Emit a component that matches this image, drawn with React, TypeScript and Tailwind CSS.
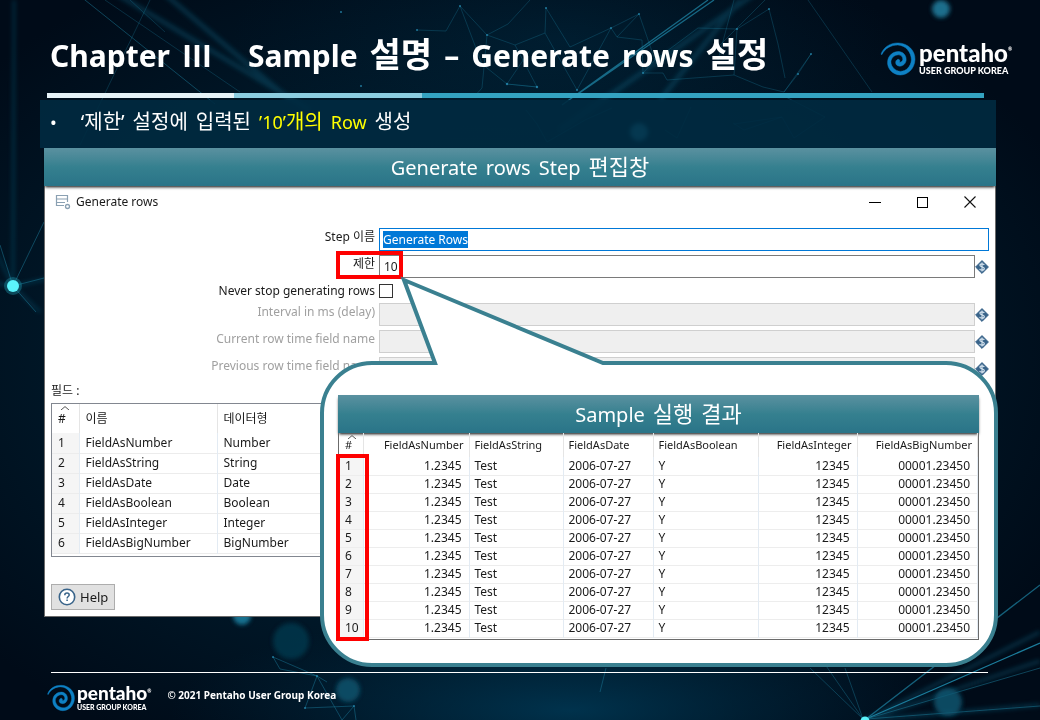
import { useEffect, useRef } from "react";

const FIELDS = [
  ["FieldAsNumber", "Number"],
  ["FieldAsString", "String"],
  ["FieldAsDate", "Date"],
  ["FieldAsBoolean", "Boolean"],
  ["FieldAsInteger", "Integer"],
  ["FieldAsBigNumber", "BigNumber"],
];

const RESULT_COLUMNS = [
  { name: "FieldAsNumber", value: "1.2345", right: true },
  { name: "FieldAsString", value: "Test", right: false },
  { name: "FieldAsDate", value: "2006-07-27", right: false },
  { name: "FieldAsBoolean", value: "Y", right: false },
  { name: "FieldAsInteger", value: "12345", right: true },
  { name: "FieldAsBigNumber", value: "00001.23450", right: true },
];

const RESULT_ROWS = Array.from({ length: 10 }, (_, i) => i + 1);

const HANGUL = /[\uac00-\ud7a3]/;

function Backdrop() {
  return (
    <svg
      className="absolute inset-0 h-full w-full"
      viewBox="0 0 1040 720"
      preserveAspectRatio="xMidYMid slice"
      aria-hidden="true"
    >
      <defs>
        <radialGradient id="base" cx="0.46" cy="0.5" r="0.62">
          <stop offset="0" stopColor="#003148" />
          <stop offset="0.55" stopColor="#001a2b" />
          <stop offset="1" stopColor="#000b18" />
        </radialGradient>
        <radialGradient id="low" cx="0.5" cy="0.5" r="0.5">
          <stop offset="0" stopColor="#00486a" stopOpacity="0.6" />
          <stop offset="1" stopColor="#00304a" stopOpacity="0" />
        </radialGradient>
        <filter id="soft" x="-50%" y="-50%" width="200%" height="200%">
          <feGaussianBlur stdDeviation="2" />
        </filter>
      </defs>
      <rect width="1040" height="720" fill="url(#base)" />
      <ellipse cx="570" cy="710" rx="400" ry="100" fill="url(#low)" />
      <ellipse cx="560" cy="40" rx="330" ry="130" fill="url(#low)" opacity="0.3" />

      <g stroke="#0a5b78" filter="url(#soft)" opacity="0.4">
        <path d="M110 -10L310 110M160 -10L290 100M740 0L660 100M560 130L760 -10" strokeWidth="5" fill="none" />
        <path d="M13 286L14 0M13 286L-10 240M13 286L46 279M13 286L40 312M13 286L-5 283" strokeWidth="3" fill="none" />
        <path d="M866 720L1040 661M866 720L1040 705M866 720L1040 632" strokeWidth="4" fill="none" />
      </g>

      <g stroke="#1b7d9c" fill="none">
        <path d="M75 -8L215 104" strokeWidth="1" opacity="0.5" />
        <path d="M105 0L240 92M130 0L165 32" strokeWidth="1" opacity="0.3" />
        <path d="M708 0L562 105M714 0L575 96" strokeWidth="1.3" opacity="0.8" />
        <path d="M765 0L715 50M734 0L718 60M808 0L872 92M150 0L80 145" strokeWidth="1" opacity="0.3" />
        <path d="M13 286L44 222M13 286L0 245M13 286L44 278M13 286L36 312" strokeWidth="1" opacity="0.5" />
        <path d="M866 719L1040 643" strokeWidth="1.3" />
        <path d="M866 719L1040 585" strokeWidth="1.3" opacity="0.75" />
        <path d="M866 719L1040 668M866 719L1040 706" strokeWidth="1" opacity="0.5" />
        <path d="M863 719L810 668M863 719L845 668M863 719L822 660" strokeWidth="1" opacity="0.4" />
        <path
          d="M417 30L446 31L460 6L487 35L508 24L530 0M460 6L482 64L507 84L537 87L515 45L487 35L482 88L473 98M546 8L545 33L515 45M546 8L570 47L611 28L639 14L617 37L611 28L577 90L545 33M639 14L655 60L643 73L642 40L617 37M643 73L663 73L667 80L734 75L737 29L769 9L778 44L785 78M737 29L698 28L655 60M811 54L798 74L784 92L811 54M734 75L763 87L784 92M537 87L507 84L530 50"
          strokeWidth="0.7"
          opacity="0.45"
        />
        <path
          d="M273 657L280 669L317 676L305 708L354 706L342 720L317 676L327 682M354 706L356 720M273 657L317 676M600 692L606 668"
          strokeWidth="0.8"
          opacity="0.6"
        />
        <path
          d="M526 110L537 124L547 142L573 127L585 120L612 108M665 130L677 138L691 107M733 123L744 130L782 117L794 138L825 117L782 95M782 117L734 124"
          strokeWidth="0.7"
          opacity="0.5"
        />
      </g>

      <g fill="#2a94bd" opacity="0.75">
        <circle cx="341" cy="12" r="1" />
        <circle cx="361" cy="86" r="1" />
        <circle cx="460" cy="6" r="1" />
        <circle cx="417" cy="30" r="1" />
        <circle cx="487" cy="35" r="1" />
        <circle cx="507" cy="84" r="1.2" />
        <circle cx="537" cy="87" r="1.2" />
        <circle cx="546" cy="8" r="1" />
        <circle cx="611" cy="28" r="1" />
        <circle cx="639" cy="14" r="1" />
        <circle cx="577" cy="90" r="1" />
        <circle cx="643" cy="73" r="1" />
        <circle cx="737" cy="29" r="1" />
        <circle cx="769" cy="9" r="1" />
        <circle cx="811" cy="54" r="1" />
        <circle cx="798" cy="74" r="1" />
        <circle cx="273" cy="657" r="1" />
        <circle cx="317" cy="676" r="1" />
        <circle cx="354" cy="706" r="1" />
        <circle cx="305" cy="708" r="1" />
      </g>

      <g filter="url(#soft)">
        <circle cx="941" cy="9" r="9" fill="#1b6e8c" />
        <circle cx="639" cy="132" r="9" fill="#35b5dd" />
        <circle cx="242" cy="616" r="9" fill="#18718f" />
        <circle cx="348" cy="690" r="12" fill="#0b5570" opacity="0.8" />
        <circle cx="291" cy="641" r="18" fill="#06425a" opacity="0.6" />
        <circle cx="948" cy="702" r="14" fill="#0c5873" opacity="0.8" />
      </g>
      <circle cx="13" cy="286" r="9" fill="#21a5bd" opacity="0.35" />
      <circle cx="13" cy="286" r="6" fill="#5bf3fb" />
      <circle cx="865" cy="721" r="4.5" fill="#5bf3fb" />
    </svg>
  );
}

function Words({ text, className, hangulClass }: { text: string; className: string; hangulClass: string }) {
  return (
    <span className={className}>
      {text.split(" ").map((word, i) => (
        <span key={i} className={HANGUL.test(word) ? hangulClass : undefined}>
          {word}{" "}
        </span>
      ))}
    </span>
  );
}

function Spiral({ className }: { className: string }) {
  return (
    <svg className={className} viewBox="35 34 107 103" aria-hidden="true">
      <path
        d="M37 71C45 48 67 36 90 37C119 38 141 60 140 87C139 115 118 134 95 134C72 133 55 114 57 93C59 74 74 62 92 63C107 65 115 78 113 91C110 104 98 110 88 106C79 102 80 90 87 87C92 85 96 90 93 95C98 96 102 92 103 88C104 80 98 73 90 73C78 73 68 82 67 94C67 109 80 122 96 123C113 123 128 108 129 88C129 65 112 44 88 43C68 43 49 53 40 72Z"
        fill="#0e81c4"
        stroke="#0e81c4"
        strokeWidth="1.5"
      />
    </svg>
  );
}

function Logo({ small = false }: { small?: boolean }) {
  return (
    <div className={small ? "flex items-start gap-0.5" : "flex items-start gap-[3px]"}>
      <Spiral className={small ? "h-7 w-7" : "h-[34px] w-9"} />
      <div className="font-['Lato','Liberation_Sans',sans-serif] text-white">
        <div className={small ? "flex text-[19px] font-black leading-[17px]" : "flex text-[24px] font-black leading-[22px]"}>
          pentaho
          <span className="text-[5px] leading-[14px]">®</span>
        </div>
        <div className={small ? "pt-0.5 text-[7px] font-black leading-[9px]" : "pt-px text-[9px] font-black leading-[11px]"}>
          USER GROUP KOREA
        </div>
      </div>
    </div>
  );
}

function VariableMark() {
  return (
    <svg className="h-[14px] w-[14px]" viewBox="0 0 14 14" aria-hidden="true">
      <path d="M7 0.6L13.4 7L7 13.4L0.6 7Z" fill="#39648a" stroke="#39648a" strokeLinejoin="round" />
      <path
        d="M9.3 5C8.9 4.1 8 3.8 7 3.8C5.8 3.8 4.9 4.4 4.9 5.3C4.9 7.2 9.3 6.3 9.3 8.5C9.3 9.6 8.2 10.2 7 10.2C5.8 10.2 4.9 9.8 4.6 8.8M7 2.6V11.4"
        fill="none"
        stroke="#d6e4ef"
        strokeWidth="1.2"
      />
    </svg>
  );
}

function SortCaret() {
  return (
    <svg className="absolute left-2 top-0.5 h-1 w-2.5" viewBox="0 0 10 4" aria-hidden="true">
      <path d="M1 4L5 0.6L9 4" fill="none" stroke="#555" />
    </svg>
  );
}

function Banner({ text }: { text: string }) {
  return (
    <h2 className="relative flex h-[38px] items-center justify-center bg-linear-to-b from-[#5a91a0] via-[#35808f] to-[#2a7488] text-[20px] leading-[30px] text-white shadow-[0_2px_3px_-1px_#000]">
      <Words text={text} className="flex items-baseline gap-2" hangulClass="text-[22px]" />
    </h2>
  );
}

function FormRow({ id, label, disabled = false, value = "" }: { id: string; label: string; disabled?: boolean; value?: string }) {
  return (
    <div className="grid grid-cols-[330px_1fr_14px] items-center">
      <label htmlFor={id} className={disabled ? "pb-[5px] text-right text-[#a0a0a0]" : "pb-[5px] text-right"}>
        {label}
      </label>
      <input
        id={id}
        type="text"
        defaultValue={value}
        disabled={disabled}
        className={
          disabled
            ? "ml-1 h-[23px] min-w-0 border border-[#cfcfcf] bg-[#efefef] px-1"
            : "ml-1 h-[23px] min-w-0 border border-[#7a7a7a] bg-white px-1 outline-none"
        }
      />
      <VariableMark />
    </div>
  );
}

function StepForm() {
  const nameRef = useRef<HTMLInputElement>(null);
  useEffect(() => {
    nameRef.current?.focus();
    nameRef.current?.select();
  }, []);

  return (
    <form className="flex flex-col gap-1 pr-1.5 pt-2.5">
      <div className="grid grid-cols-[330px_1fr] items-center">
        <label htmlFor="step-name" className="pb-[5px] text-right">
          Step 이름
        </label>
        <input
          id="step-name"
          ref={nameRef}
          type="text"
          defaultValue="Generate Rows"
          className="ml-1 h-[23px] min-w-0 border border-[#0078d7] bg-white px-[3px] outline-none selection:bg-[#0078d7] selection:text-white"
        />
      </div>
      <div className="relative">
        <FormRow id="limit" label="제한" value="10" />
        <div className="pointer-events-none absolute -top-1 left-[291px] h-7 w-[67px] border-4 border-[#fe0000]" />
      </div>
      <div className="grid grid-cols-[330px_1fr] items-center">
        <label htmlFor="never-stop" className="text-right leading-[17px]">
          Never stop generating rows
        </label>
        <input id="never-stop" type="checkbox" className="ml-1 h-[14px] w-[14px] appearance-none border border-[#333] bg-white" />
      </div>
      <FormRow id="interval" label="Interval in ms (delay)" disabled />
      <FormRow id="current-row" label="Current row time field name" disabled />
      <FormRow id="previous-row" label="Previous row time field name" disabled />
    </form>
  );
}

function FieldsTable() {
  return (
    <div className="border border-[#828790] pb-0.5">
      <table className="w-full table-fixed border-collapse text-left">
        <colgroup>
          <col className="w-[27px]" />
          <col className="w-[138px]" />
          <col />
        </colgroup>
        <thead>
          <tr className="h-[29px]">
            <th className="relative border-r border-[#e5e5e5] pl-1.5 font-normal">
              <SortCaret />#
            </th>
            <th className="border-r border-[#e5e5e5] pl-1.5 font-normal">이름</th>
            <th className="pl-1.5 font-normal">데이터형</th>
          </tr>
        </thead>
        <tbody>
          {FIELDS.map(([name, type], i) => (
            <tr key={name} className="h-5 border-b border-[#ececec]">
              <td className="border-r border-[#e3ebf3] bg-[#f5f5f5] pl-1.5">{i + 1}</td>
              <td className="border-r border-[#e3ebf3] pl-1.5">{name}</td>
              <td className="pl-1.5">{type}</td>
            </tr>
          ))}
        </tbody>
      </table>
    </div>
  );
}

function StepWindow() {
  return (
    <section className="flex flex-col border border-t-0 border-[#6b6b6b] bg-white text-[12px] leading-[18px] text-[#1a1a1a]">
      <div className="flex h-8 items-center gap-[5px] px-2.5">
        <svg className="h-4 w-4" viewBox="0 0 16 16" fill="none" stroke="#8aa0b2" aria-hidden="true">
          <path d="M9 11.5H1.5V1.5H12.5V8M1.5 5H12.5M1.5 8.5H10" strokeWidth="1.2" />
          <circle cx="12.5" cy="12.5" r="2" strokeWidth="1.3" />
        </svg>
        <span className="grow">Generate rows</span>
        <div className="flex items-center gap-9 pr-[9px]">
          <button type="button" aria-label="Minimize" className="flex h-3 w-3 items-center">
            <span className="h-px w-3 bg-black" />
          </button>
          <button type="button" aria-label="Maximize" className="h-[11px] w-[11px] border border-black" />
          <button type="button" aria-label="Close">
            <svg className="h-3 w-3" viewBox="0 0 12 12" aria-hidden="true">
              <path d="M0.5 0.5L11.5 11.5M11.5 0.5L0.5 11.5" stroke="#111" strokeWidth="1.1" />
            </svg>
          </button>
        </div>
      </div>
      <StepForm />
      <div className="px-1.5 pb-1.5 pt-0.5">
        <div className="pb-[3px]">필드 :</div>
        <FieldsTable />
        <button
          type="button"
          className="mt-[27px] flex h-[26px] items-center gap-1 border border-[#adadad] bg-[#e1e1e1] px-1.5 text-[13px]"
        >
          <svg className="h-[18px] w-[18px]" viewBox="0 0 18 18" fill="none" stroke="#39648a" aria-hidden="true">
            <circle cx="9" cy="9" r="7.7" strokeWidth="1.6" fill="#fff" />
            <path d="M6.8 7.2C6.8 5.8 7.8 5.1 9 5.1C10.3 5.1 11.2 5.9 11.2 7C11.2 8.5 9.1 8.6 9.1 10.4M9.1 11.6V13" strokeWidth="1.5" />
          </svg>
          Help
        </button>
      </div>
    </section>
  );
}

function ResultCallout() {
  return (
    <section className="absolute left-[320px] top-[276px] h-[392px] w-[678px] text-[11px] leading-4 text-[#1a1a1a]">
      <svg className="absolute inset-0 h-full w-full" viewBox="0 0 678 392" aria-hidden="true">
        <path
          d="M52 87H115L84 4L283 87H626A50 50 0 0 1 676 137V339A50 50 0 0 1 626 389H52A50 50 0 0 1 2 339V137A50 50 0 0 1 52 87Z"
          fill="#fff"
          stroke="#3a8090"
          strokeWidth="4"
        />
      </svg>
      <div className="relative pl-[18px] pr-[19px] pt-[119px]">
        <Banner text="Sample 실행 결과" />
        <div className="relative border border-t-0 border-[#6b6b6b] pb-px">
          <table className="w-full table-fixed border-collapse">
            <colgroup>
              <col className="w-[24px]" />
              <col className="w-[106px]" />
              <col className="w-[94px]" />
              <col className="w-[90px]" />
              <col className="w-[105px]" />
              <col className="w-[99px]" />
              <col />
            </colgroup>
            <thead>
              <tr className="h-6">
                <th className="relative border-r border-[#e5e5e5] pl-1.5 text-left font-normal">
                  <SortCaret />#
                </th>
                {RESULT_COLUMNS.map((c) => (
                  <th
                    key={c.name}
                    className={
                      c.right
                        ? "border-r border-[#e5e5e5] pr-[5px] text-right font-normal"
                        : "border-r border-[#e5e5e5] pl-[5px] text-left font-normal"
                    }
                  >
                    {c.name}
                  </th>
                ))}
              </tr>
            </thead>
            <tbody className="text-[12px]">
              {RESULT_ROWS.map((n) => (
                <tr key={n} className="h-[18px] border-b border-[#ededed]">
                  <td className="border-r border-[#e3ebf3] bg-[#f5f5f5] pl-1.5">{n}</td>
                  {RESULT_COLUMNS.map((c) => (
                    <td
                      key={c.name}
                      className={c.right ? "border-r border-[#e3ebf3] pr-[7px] text-right" : "border-r border-[#e3ebf3] pl-[5px]"}
                    >
                      {c.value}
                    </td>
                  ))}
                </tr>
              ))}
            </tbody>
          </table>
          <div className="pointer-events-none absolute -bottom-0.5 -left-[3px] top-[21px] w-[33px] border-4 border-[#fe0000]" />
        </div>
      </div>
    </section>
  );
}

export default function App() {
  return (
    <div className="relative flex min-h-screen flex-col overflow-hidden bg-[#00111f] font-['Noto_Sans','Noto_Sans_CJK_KR',sans-serif]">
      <Backdrop />
      <header className="relative flex h-[93px] items-start justify-between pl-[50px] pr-7 pt-[31px]">
        <h1 className="flex items-baseline gap-9 text-[30px] font-bold leading-[46px] text-white">
          <span className="flex items-baseline gap-3">
            Chapter <span className="font-['Noto_Sans_CJK_KR',sans-serif]">Ⅲ</span>
          </span>
          <Words
            text="Sample 설명 – Generate rows 설정"
            className="flex items-baseline gap-3"
            hangulClass="text-[34px]"
          />
        </h1>
        <div className="pt-[11px]">
          <Logo />
        </div>
      </header>
      <div className="relative ml-[47px] mr-14 flex h-[5px]">
        <div className="w-1/5 bg-[#e6f3f8]" />
        <div className="w-1/5 bg-[#8ccde0]" />
        <div className="grow bg-[#34a3c1]" />
      </div>
      <main className="relative ml-10 mr-11 mt-0.5">
        <ul className="flex h-12 items-center bg-[#002a40]/90 pb-1 pl-2.5 text-[20px] text-white">
          <li className="flex items-baseline gap-6">
            <span className="text-[18px]">•</span>
            <span className="flex items-baseline gap-2">
              <span>‘제한’ </span>
              <span>설정에 </span>
              <span>입력된 </span>
              <span className="flex items-baseline gap-2 text-[#ffff00]">
                <span>
                  <span className="text-[18px]">’10’</span>개의{" "}
                </span>
                <span className="text-[18px]">Row </span>
              </span>
              <span>생성</span>
            </span>
          </li>
        </ul>
        <div className="ml-1">
          <Banner text="Generate rows Step 편집창" />
          <StepWindow />
        </div>
      </main>
      <ResultCallout />
      <footer className="relative mt-auto ml-[47px] mr-[52px] pb-2">
        <div className="ml-1 h-px bg-white" />
        <div className="flex items-start gap-4 pt-[11px]">
          <Logo small />
          <span className="pt-[3px] text-[10px] font-bold leading-4 text-white">© 2021 Pentaho User Group Korea</span>
        </div>
      </footer>
    </div>
  );
}
